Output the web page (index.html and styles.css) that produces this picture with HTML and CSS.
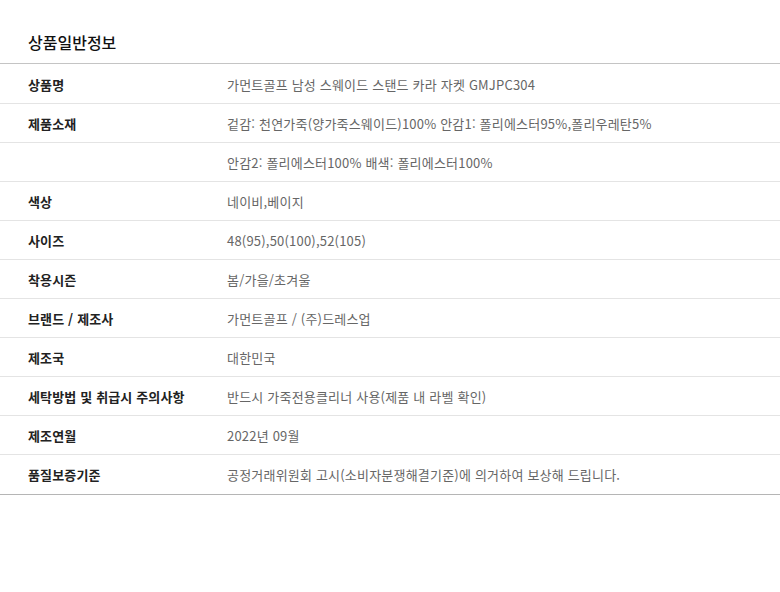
FILE: index.html
```html
<!DOCTYPE html>
<html lang="ko">
<head>
<meta charset="utf-8">
<link rel="stylesheet" href="styles.css">
</head>
<body>
<section class="info">
  <h2 class="title">상품일반정보</h2>
  <table class="spec">
    <tbody>
      <tr><th>상품명</th><td>가먼트골프 남성 스웨이드 스탠드 카라 자켓 GMJPC304</td></tr>
      <tr><th>제품소재</th><td>겉감: 천연가죽(양가죽스웨이드)100% 안감1: 폴리에스터95%,폴리우레탄5%</td></tr>
      <tr><th></th><td>안감2: 폴리에스터100% 배색: 폴리에스터100%</td></tr>
      <tr><th>색상</th><td>네이비,베이지</td></tr>
      <tr><th>사이즈</th><td>48(95),50(100),52(105)</td></tr>
      <tr><th>착용시즌</th><td>봄/가을/초겨울</td></tr>
      <tr><th>브랜드 / 제조사</th><td>가먼트골프 / (주)드레스업</td></tr>
      <tr><th>제조국</th><td>대한민국</td></tr>
      <tr><th>세탁방법 및 취급시 주의사항</th><td>반드시 가죽전용클리너 사용(제품 내 라벨 확인)</td></tr>
      <tr><th>제조연월</th><td>2022년 09월</td></tr>
      <tr><th>품질보증기준</th><td>공정거래위원회 고시(소비자분쟁해결기준)에 의거하여 보상해 드립니다.</td></tr>
    </tbody>
  </table>
</section>
</body>
</html>
```

FILE: styles.css
```css
html, body {
  margin: 0;
  padding: 0;
  background: #fff;
}
body {
  font-family: "Noto Sans CJK KR", "Noto Sans", sans-serif;
  color: #222;
}
.info {
  padding-top: 28px;
}
.title {
  margin: 0;
  padding: 0 28px;
  height: 35px;
  font-size: 16px;
  font-weight: 500;
  line-height: 29px;
  color: #111;
  border-bottom: 1px solid #c4c4c4;
}
.spec {
  width: 100%;
  border-collapse: collapse;
  border-bottom: 1px solid #b5b5b5;
}
.spec th, .spec td {
  height: 38px;
  padding: 0;
  vertical-align: middle;
  font-size: 13px;
  text-align: left;
  border-top: 1px solid #e4e4e4;
}
.spec tr:first-child th, .spec tr:first-child td {
  border-top: none;
  padding-top: 1px;
}
.spec tr:last-child th, .spec tr:last-child td {
  height: 39px;
}
.spec th {
  width: 199px;
  padding-left: 28px;
  font-weight: 700;
  color: #222;
  letter-spacing: 0.15px;
}
.spec td {
  color: #666;
  letter-spacing: 0.2px;
}
```
